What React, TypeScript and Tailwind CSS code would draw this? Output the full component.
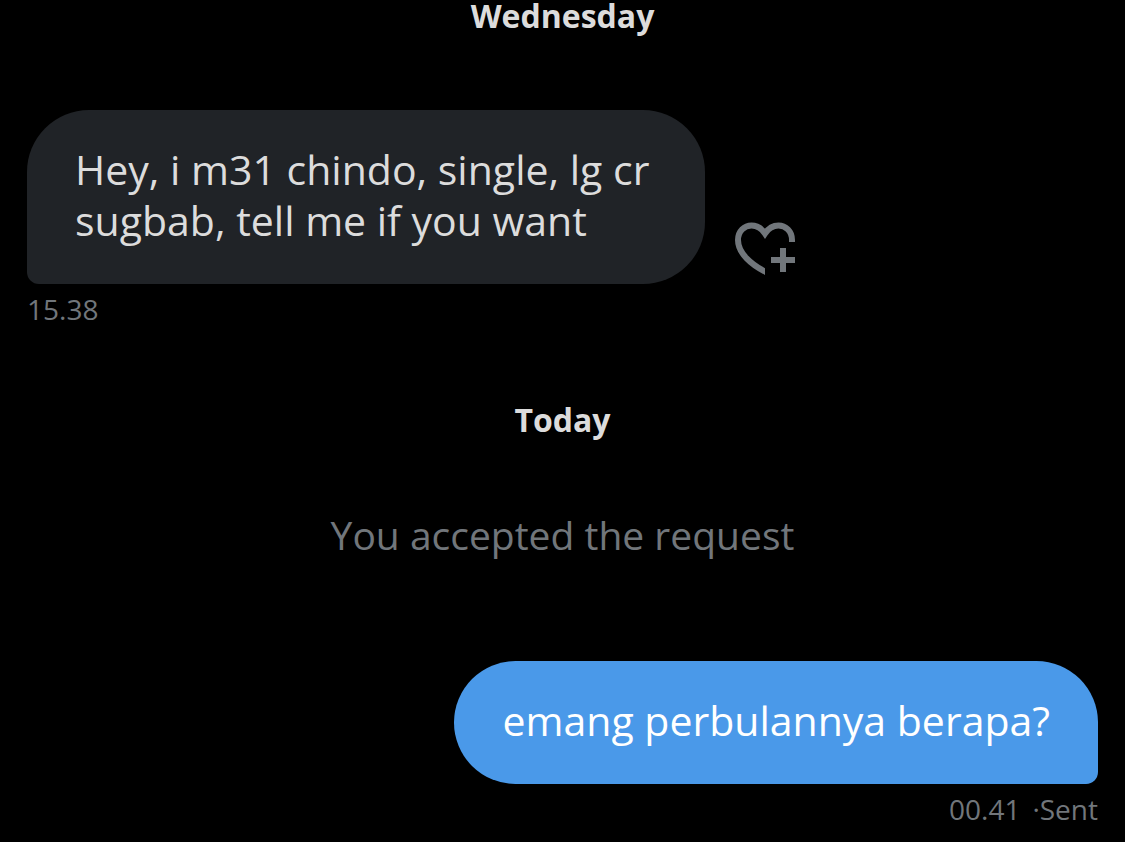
import type { ReactNode } from 'react'
import { clsx } from 'clsx'

interface MessageProps {
  text: string
  time: string
  status?: string
  own?: boolean
}

function HeartPlusIcon() {
  return (
    <svg viewBox="0 0 60 54" className="h-[54px] w-15" fill="none" stroke="currentColor" strokeWidth="6" aria-hidden="true">
      <clipPath id="heart-cut">
        <path d="M0 0H60V20H30V54H0Z" />
      </clipPath>
      <path
        clipPath="url(#heart-cut)"
        d="M57 22V18C57 9 50.500 3.500 43.500 3.500C37.500 3.500 33 7 30 11.500C27 7 22.500 3.500 16.500 3.500C9.500 3.500 3 9 3 18C3 31 16 43 33 51"
      />
      <path d="M48 26V50M36 38H60" />
    </svg>
  )
}

function DayLabel({ children }: { children: ReactNode }) {
  return <h2 className="text-center text-[32px] leading-8 font-bold text-[#dcdcdc]">{children}</h2>
}

function Message({ text, time, status, own }: MessageProps) {
  return (
    <div className={clsx('flex flex-col', own ? 'items-end' : 'items-start')}>
      <div className="flex max-w-full items-end gap-[30px]">
        <p
          className={clsx(
            'max-w-[678px] rounded-[62px] px-12 pt-[34px] pb-[38px] text-[41px] leading-[51px]',
            own ? 'rounded-br-xl bg-[#4a99e9] text-white' : 'rounded-bl-xl bg-[#202327] text-[#dcdcdc]'
          )}
        >
          {text}
        </p>
        {!own && (
          <button type="button" aria-label="React" className="mb-2 shrink-0 text-[#71767b]">
            <HeartPlusIcon />
          </button>
        )}
      </div>
      <p className="mt-[7px] flex gap-3 text-[28px] leading-9 text-[#71767b]">
        <time>{time}</time>
        {status && <span>·{status}</span>}
      </p>
    </div>
  )
}

export default function App() {
  return (
    <main className="min-h-screen bg-black px-[27px] font-['Open_Sans',sans-serif]">
      <DayLabel>Wednesday</DayLabel>
      <div className="mt-[78px]">
        <Message text="Hey, i m31 chindo, single, lg cr sugbab, tell me if you want" time="15.38" />
      </div>
      <div className="mt-[77px]">
        <DayLabel>Today</DayLabel>
      </div>
      <p className="mt-[75px] text-center text-[39px] leading-12 text-[#71767b]">You accepted the request</p>
      <div className="mt-[102px]">
        <Message own text="emang perbulannya berapa?" time="00.41" status="Sent" />
      </div>
    </main>
  )
}
